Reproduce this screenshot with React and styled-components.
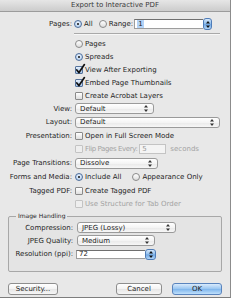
import React from "react";
import styled, { createGlobalStyle } from "styled-components";

const Global = createGlobalStyle`
  html, body { margin: 0; padding: 0; background: #ffffff; }
  body { font-family: "DejaVu Sans", "Liberation Sans", sans-serif; font-size: 7px; color: #1e1e1e; }
  * { box-sizing: border-box; }
`;

const Window = styled.div`
  width: 231px;
  height: 298px;
  background: #e8e8e8;
  border-right: 1px solid #8c8c8c;
  border-bottom: 1px solid #7d7d7d;
  display: flex;
  flex-direction: column;
`;

const TitleBar = styled.div`
  height: 12px;
  flex: none;
  background: linear-gradient(#e6e6e6, #cccccc);
  border-bottom: 1px solid #9c9c9c;
  display: flex;
  align-items: center;
  justify-content: center;
  color: #3a3a3a;
  font-size: 7px;
  line-height: 11px;
`;

const Body = styled.div`
  padding-top: 6px;
  display: flex;
  flex-direction: column;
`;

const Row = styled.div`
  height: ${(p) => p.$h || 13}px;
  display: flex;
  align-items: center;
  flex: none;
`;

const Label = styled.div`
  width: ${(p) => p.$w || 72}px;
  margin-right: ${(p) => (p.$gap != null ? p.$gap : 3)}px;
  text-align: right;
  white-space: nowrap;
  flex: none;
`;

const Controls = styled.div`
  display: flex;
  align-items: center;
  gap: ${(p) => p.$gap || 0}px;
`;

const Option = styled.label`
  display: flex;
  align-items: center;
  gap: 2px;
  white-space: nowrap;
  margin-right: ${(p) => p.$mr || 0}px;
  color: ${(p) => (p.$disabled ? "#a3a3a3" : "#1e1e1e")};
  letter-spacing: ${(p) => (p.$tight ? "-0.4px" : "0")};
`;

const Radio = styled.span`
  position: relative;
  width: 8px;
  height: 8px;
  flex: none;
  border-radius: 50%;
  border: 1px solid ${(p) => (p.$on ? "#4f6f9c" : "#8a8a8a")};
  background: ${(p) =>
    p.$on
      ? "radial-gradient(circle at 50% 35%, #eef5fd, #a9c8ec)"
      : "linear-gradient(#ffffff, #dcdcdc)"};
  &::after {
    content: "";
    display: ${(p) => (p.$on ? "block" : "none")};
    position: absolute;
    left: 2px;
    top: 2px;
    width: 2px;
    height: 2px;
    border-radius: 50%;
    background: #111;
  }
`;

const Box = styled.span`
  position: relative;
  width: 8px;
  height: 8px;
  flex: none;
  border-radius: 1px;
  border: 1px solid ${(p) => (p.$disabled ? "#c3c3c3" : p.$on ? "#56739c" : "#8a8a8a")};
  background: ${(p) =>
    p.$disabled
      ? "#eeeeee"
      : p.$on
      ? "linear-gradient(#e3eefb, #a9c7ea)"
      : "linear-gradient(#ffffff, #dedede)"};
`;

const CheckMark = styled.svg`
  position: absolute;
  left: 0px;
  top: -3px;
  width: 9px;
  height: 10px;
  overflow: visible;
`;

const Check = ({ on, disabled }) => (
  <Box $on={on} $disabled={disabled}>
    {on && (
      <CheckMark viewBox="0 0 9 10">
        <path d="M0.8 6 L3 8.6 L8.4 0.6" fill="none" stroke="#111" strokeWidth="1.7" strokeLinecap="round" strokeLinejoin="round" />
      </CheckMark>
    )}
  </Box>
);

const Arrows = styled.svg`
  width: 4px;
  height: 7px;
  flex: none;
`;

const UpDown = ({ color = "#333" }) => (
  <Arrows viewBox="0 0 4 7">
    <path d="M2 0 L4 2.6 L0 2.6 Z M2 7 L4 4.4 L0 4.4 Z" fill={color} />
  </Arrows>
);

const SelectBox = styled.div`
  width: ${(p) => p.$w}px;
  height: 11px;
  border: 1px solid #9a9a9a;
  border-radius: 3px;
  background: linear-gradient(#ffffff, #f4f4f4 50%, #e9e9e9 52%, #f7f7f7);
  display: flex;
  align-items: center;
  justify-content: space-between;
  padding: 0 5px 0 4px;
  white-space: nowrap;
  flex: none;
`;

const Select = ({ w, children }) => (
  <SelectBox $w={w}>
    <span>{children}</span>
    <UpDown />
  </SelectBox>
);

const ComboWrap = styled.div`
  width: ${(p) => p.$w}px;
  height: ${(p) => p.$h}px;
  display: flex;
  align-items: stretch;
  flex: none;
`;

const Field = styled.div`
  flex: 1;
  background: #ffffff;
  border: 1px solid #9d9d9d;
  border-top-color: #6f6f6f;
  border-right: none;
  margin: 1px 0;
  display: flex;
  align-items: center;
  padding-left: 2px;
`;

const Selected = styled.span`
  background: #b4d3f7;
  padding: 0 1px;
  line-height: 8px;
`;

const Stepper = styled.div`
  width: ${(p) => p.$w}px;
  flex: none;
  border: 1px solid #4e7cb8;
  border-radius: 3px;
  background: linear-gradient(#d6e8fb, #8dbcec 48%, #6fa6e2 52%, #b3d6f8);
  display: flex;
  align-items: center;
  justify-content: center;
`;

const SmallInput = styled.div`
  width: ${(p) => p.$w}px;
  height: 10px;
  background: #f4f4f4;
  border: 1px solid #c4c4c4;
  color: #9a9a9a;
  display: flex;
  align-items: center;
  padding-left: 2px;
  margin: 0 4px 0 2px;
  flex: none;
`;

const Muted = styled.span`
  color: #a3a3a3;
`;

const Separator = styled.div`
  height: 2px;
  margin: 3px 10px 2px 74px;
  border-top: 1px solid #a9a9a9;
  border-bottom: 1px solid #f7f7f7;
  flex: none;
`;

const Group = styled.div`
  margin: 6px 8px 0 8px;
  height: 56px;
  border: 1px solid #a8a8a8;
  border-radius: 2px;
  background: #e4e4e4;
  display: flex;
  flex-direction: column;
  flex: none;
`;

const Legend = styled.div`
  align-self: flex-start;
  margin: -5px 0 0 7px;
  padding: 0 2px;
  font-size: 6px;
  line-height: 8px;
  background: #e8e8e8;
  color: #1e1e1e;
`;

const GroupRows = styled.div`
  display: flex;
  flex-direction: column;
  padding-top: 1px;
`;

const ButtonRow = styled.div`
  margin: 11px 8px 0 8px;
  display: flex;
  align-items: center;
  height: 12px;
`;

const Button = styled.div`
  width: ${(p) => p.$w}px;
  height: 12px;
  margin-left: ${(p) => p.$ml || 0}px;
  border: 1px solid ${(p) => (p.$primary ? "#5a84bd" : "#8e8e8e")};
  border-radius: 3px;
  background: ${(p) =>
    p.$primary
      ? "linear-gradient(#d9ebfc, #9ac6f1 48%, #80b6ec 52%, #bfe0fc)"
      : "linear-gradient(#ffffff, #f3f3f3 50%, #e6e6e6 52%, #f6f6f6)"};
  display: flex;
  align-items: center;
  justify-content: center;
  flex: none;
`;

export default function App() {
  return (
    <>
      <Global />
      <Window>
        <TitleBar>Export to Interactive PDF</TitleBar>
        <Body>
          <Row $h={12}>
            <Label $gap={2}>Pages:</Label>
            <Controls>
              <Option $mr={6}>
                <Radio $on />
                All
              </Option>
              <Option $mr={1}>
                <Radio />
                Range:
              </Option>
              <ComboWrap $w={78} $h={12}>
                <Field>
                  <Selected>1</Selected>
                </Field>
                <Stepper $w={9}>
                  <UpDown color="#111" />
                </Stepper>
              </ComboWrap>
            </Controls>
          </Row>
          <Separator />
          <Row>
            <Label />
            <Option>
              <Radio />
              Pages
            </Option>
          </Row>
          <Row>
            <Label />
            <Option>
              <Radio $on />
              Spreads
            </Option>
          </Row>
          <Row>
            <Label />
            <Option>
              <Check on />
              View After Exporting
            </Option>
          </Row>
          <Row>
            <Label />
            <Option>
              <Check on />
              Embed Page Thumbnails
            </Option>
          </Row>
          <Row>
            <Label />
            <Option>
              <Check />
              Create Acrobat Layers
            </Option>
          </Row>
          <Row>
            <Label>View:</Label>
            <Select w={79}>Default</Select>
          </Row>
          <Row $h={14}>
            <Label>Layout:</Label>
            <Select w={145}>Default</Select>
          </Row>
          <Row>
            <Label>Presentation:</Label>
            <Option>
              <Check />
              Open in Full Screen Mode
            </Option>
          </Row>
          <Row $h={14}>
            <Label />
            <Option $disabled $tight>
              <Check disabled />
              Flip Pages Every:
            </Option>
            <SmallInput $w={27}>5</SmallInput>
            <Muted>seconds</Muted>
          </Row>
          <Row $h={14}>
            <Label>Page Transitions:</Label>
            <Select w={83}>Dissolve</Select>
          </Row>
          <Row $h={14}>
            <Label>Forms and Media:</Label>
            <Controls>
              <Option $mr={11}>
                <Radio $on />
                Include All
              </Option>
              <Option>
                <Radio />
                Appearance Only
              </Option>
            </Controls>
          </Row>
          <Row>
            <Label>Tagged PDF:</Label>
            <Option>
              <Check />
              Create Tagged PDF
            </Option>
          </Row>
          <Row>
            <Label />
            <Option $disabled>
              <Check disabled />
              Use Structure for Tab Order
            </Option>
          </Row>
          <Group>
            <Legend>Image Handling</Legend>
            <GroupRows>
              <Row>
                <Label $w={64} $gap={4}>Compression:</Label>
                <Select w={99}>JPEG (Lossy)</Select>
              </Row>
              <Row>
                <Label $w={64} $gap={4}>JPEG Quality:</Label>
                <Select w={78}>Medium</Select>
              </Row>
              <Row $h={14}>
                <Label $w={64} $gap={3}>Resolution (ppi):</Label>
                <ComboWrap $w={80} $h={11}>
                  <Field>72</Field>
                  <Stepper $w={11}>
                    <UpDown color="#111" />
                  </Stepper>
                </ComboWrap>
              </Row>
            </GroupRows>
          </Group>
          <ButtonRow>
            <Button $w={50}>Security...</Button>
            <Button $w={46} $ml={58}>Cancel</Button>
            <Button $w={50} $ml={10} $primary>OK</Button>
          </ButtonRow>
        </Body>
      </Window>
    </>
  );
}
